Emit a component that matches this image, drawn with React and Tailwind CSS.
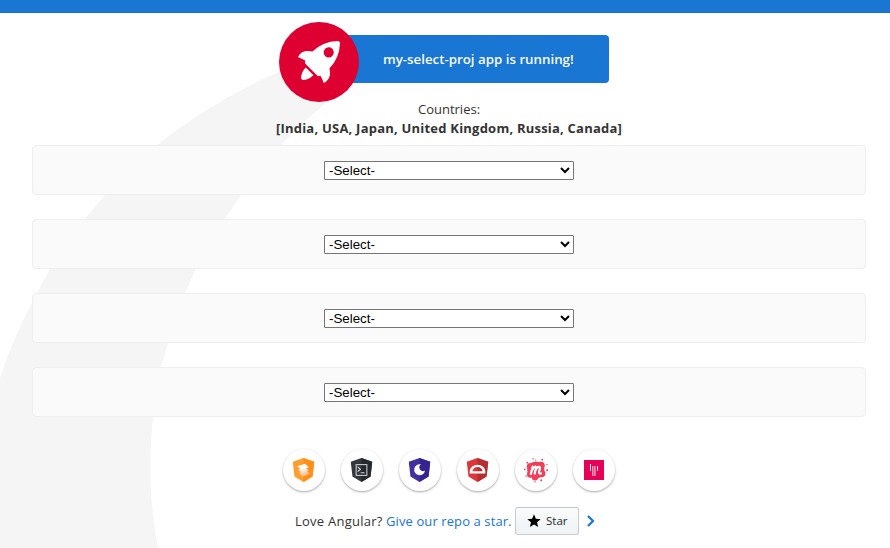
const SHIELD = "M15 0 L29 4.8 L26.8 24 L15 31 L3.2 24 L1 4.8 Z";
const SHIELD_RIGHT = "M15 0 L29 4.8 L26.8 24 L15 31 Z";

function Shield({ left, right, children }) {
  return (
    <svg viewBox="0 0 30 31" className="mr-px h-6 w-[23px]">
      <path d={SHIELD} fill={left} />
      <path d={SHIELD_RIGHT} fill={right} />
      {children}
    </svg>
  );
}

function AnimationsIcon() {
  return (
    <Shield left="#ff9d2e" right="#ff8f17">
      <path d="M9 19.5 L18 16 L23 20 L14 24 Z" fill="#ffc9a0" />
      <path d="M8 15 L17 12 L22 16 L13 20 Z" fill="#ffe4d4" />
      <path d="M7 10.5 L17 7.5 L22 12 L12.5 15.5 Z" fill="#fff" />
    </Shield>
  );
}

function CliIcon() {
  return (
    <Shield left="#33383e" right="#24292e">
      <rect x="8" y="8.5" width="14" height="14" fill="none" stroke="#d8d8d8" strokeWidth="1.3" />
      <path d="M10 11.5 L13.5 14.5 L10 17.5 M14 19.2 H19" fill="none" stroke="#d8d8d8" strokeWidth="1.4" />
    </Shield>
  );
}

function AuguryIcon() {
  return (
    <Shield left="#42309f" right="#35248f">
      <path d="M17 8.3 A7.1 7.1 0 1 0 22.2 16.2 A4.6 4.6 0 1 1 17 8.3 Z" fill="#fff" />
    </Shield>
  );
}

function ProtractorIcon() {
  return (
    <Shield left="#e13439" right="#b52e31">
      <path
        fillRule="evenodd"
        d="M4.8 20.2 V17.6 A10.2 8.8 0 0 1 25.2 17.6 V20.2 Z M8.4 17.2 H21.6 A6.6 5.6 0 0 0 8.4 17.2 Z"
        fill="#fff"
      />
    </Shield>
  );
}

function MeetupIcon() {
  return (
    <svg viewBox="0 0 26 26" className="mr-px size-[26px]" fill="#f13f59">
      <circle cx="12.8" cy="13" r="8.6" />
      <circle cx="7.3" cy="9.5" r="3.5" />
      <circle cx="18" cy="8.6" r="3.8" />
      <circle cx="18.6" cy="16.5" r="3.8" />
      <circle cx="7.5" cy="17.3" r="3.5" />
      <circle cx="12" cy="20.3" r="3.2" />
      <circle cx="4.3" cy="5.7" r="0.9" />
      <circle cx="10.1" cy="1.8" r="0.7" />
      <circle cx="12.8" cy="2.9" r="0.6" />
      <circle cx="19.2" cy="2.7" r="0.9" />
      <circle cx="24" cy="7.5" r="0.7" />
      <circle cx="24.2" cy="13.3" r="1" />
      <circle cx="1.7" cy="12.4" r="0.8" />
      <circle cx="3.1" cy="19" r="0.8" />
      <circle cx="12" cy="24.8" r="0.7" />
      <circle cx="18.2" cy="23.2" r="1" />
      <path
        d="M7.8 17 L9.7 9.7 M9 13.7 C10.4 9.2 14 8.4 12.8 12 L11.6 16.6 M12.6 13 C14.4 8.8 18 9 16.8 12.2 C15.5 15.5 15.8 17.2 18 16.5"
        fill="none"
        stroke="#fff"
        strokeWidth="2.2"
        strokeLinecap="round"
        strokeLinejoin="round"
      />
    </svg>
  );
}

function GitterIcon() {
  return (
    <svg viewBox="0 0 20 20" className="size-5">
      <rect width="20" height="20" fill="#e60256" />
      <path d="M6.5 4 V11 M13.5 6 V11" stroke="#fff" strokeWidth="1" />
      <path d="M8.8 6 V16 M10.9 6 V16" stroke="#f69ab9" strokeWidth="1.5" />
    </svg>
  );
}

function RocketIcon() {
  return (
    <svg viewBox="0 0 101.678 101.678" className="relative size-20">
      <circle cx="50.839" cy="50.839" r="50.839" fill="#dd0031" />
      <g transform="translate(24.185 24.185)" fill="#fff">
        <path
          d="M3.4,42.615a3.084,3.084,0,0,0,3.553,3.553,21.419,21.419,0,0,0,12.215-6.107L9.511,30.4A21.419,21.419,0,0,0,3.4,42.615Z"
          transform="translate(0.371 3.363)"
        />
        <path d="M53.3,3.221A3.09,3.09,0,0,0,50.081,0,48.227,48.227,0,0,0,18.322,13.437c-6-1.666-14.991-1.221-18.322,7.218A33.892,33.892,0,0,1,9.439,25.1l-.333.666a3.013,3.013,0,0,0,.555,3.553L23.985,43.641a2.9,2.9,0,0,0,3.553.555l.666-.333A33.892,33.892,0,0,1,32.647,53.3c8.55-3.664,8.884-12.326,7.218-18.322A48.227,48.227,0,0,0,53.3,3.221ZM34.424,9.772a6.439,6.439,0,1,1,9.106,9.106,6.368,6.368,0,0,1-9.106,0A6.467,6.467,0,0,1,34.424,9.772Z" />
      </g>
    </svg>
  );
}

const LINKS = [AnimationsIcon, CliIcon, AuguryIcon, ProtractorIcon, MeetupIcon, GitterIcon];

export default function App() {
  return (
    <div className="relative h-[548px] w-full overflow-hidden bg-white font-['Open_Sans','Noto_Sans',sans-serif] text-sm text-[#333]">
      <svg viewBox="0 0 890 548" className="absolute inset-0 h-[548px] w-[890px]">
        <path
          d="M330 54 Q305 61 279 72 Q215 99 157 145 Q129 169 105 195 L85 219 Q66 244 50 269 Q40 286 32 303 Q12 340 0 378 V548 H158 Q152 515 151 490 Q149 455 153 417 Q156 390 161 367 L168 343 Q175 317 185 293 L196 269 Q208 244 225 219 L241 195 Q258 170 281 145 Q302 123 327 102 Z"
          fill="#f5f5f5"
        />
      </svg>
      <header className="h-[13px] bg-[#1976d2]" />
      <main className="relative flex flex-col pl-8 pr-6 pt-[9px]">
        <div className="flex items-center pl-[247px]">
          <RocketIcon />
          <div className="-ml-10 -mt-[6px] flex h-12 w-[290px] items-center rounded bg-[#1976d2] pl-[64px] font-semibold text-[#fafafa]">
            <span className="whitespace-nowrap text-[13.3px] leading-5">my-select-proj app is running!</span>
          </div>
        </div>
        <div className="flex h-[43px] flex-col items-center text-[13px] leading-[19px]">
          <span className="-mt-0.5">Countries:</span>
          <b className="whitespace-nowrap tracking-[0.22px]">[India, USA, Japan, United Kingdom, Russia, Canada]</b>
        </div>
        <div className="flex flex-col gap-6">
          {[0, 1, 2, 3].map((n) => (
            <div
              key={n}
              className="flex h-[50px] items-center justify-center rounded border border-[#eee] bg-[#fafafa]"
            >
              <select className="h-[19px] w-[250px] rounded-[1px] border border-[#767676] bg-white font-['Liberation_Sans',Arial,sans-serif] text-[13.333px] leading-[normal] text-black">
                <option>-Select-</option>
              </select>
            </div>
          ))}
        </div>
        <div className="mt-8 flex justify-center gap-4">
          {LINKS.map((Icon, i) => (
            <a
              key={i}
              className="flex size-[42px] items-center justify-center rounded-full bg-white shadow-[0_1px_3px_rgba(0,0,0,0.12),0_1px_2px_rgba(0,0,0,0.24)]"
            >
              <Icon />
            </a>
          ))}
        </div>
        <footer className="mt-4 flex h-7 items-center whitespace-nowrap pl-[263px] text-[13px]">
          <span className="w-[91px] tracking-[0.25px]">Love Angular?</span>
          <a className="w-[129px] tracking-[0.1px] text-[#1976d2]">Give our repo a star.</a>
          <div className="flex h-7 w-16 items-center rounded-[3px] border border-[#1b1f23]/20 bg-linear-to-b from-[#fafbfc] to-[#eff3f6] pl-[10px] text-[11.5px] font-medium text-[#24292e]">
            <svg viewBox="0 0 24 24" className="mr-1 size-4" fill="#000">
              <path d="M12 17.27L18.18 21l-1.64-7.03L22 9.24l-7.19-.61L12 2 9.19 8.63 2 9.24l5.46 4.73L5.82 21z" />
            </svg>
            Star
          </div>
          <svg viewBox="0 0 16 16" className="ml-1 size-4" fill="none" stroke="#1976d2" strokeWidth="2.2">
            <path d="M5 3 L10 8 L5 13" />
          </svg>
        </footer>
      </main>
    </div>
  );
}
